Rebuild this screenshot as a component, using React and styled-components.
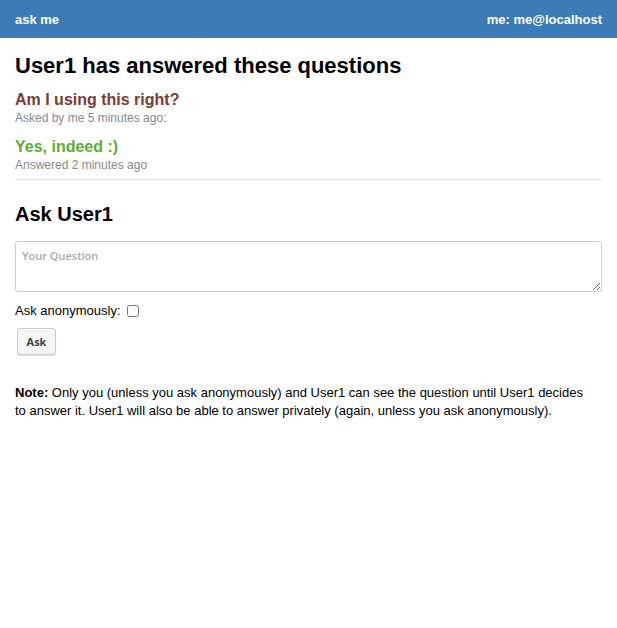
import styled, { createGlobalStyle } from "styled-components";

const Global = createGlobalStyle`
  body {
    margin: 0;
    font-family: "Liberation Sans", Arial, sans-serif;
    background: #fff;
    color: #000;
  }
`;

const Bar = styled.div`
  height: 38px;
  background: #3d7ab8;
  color: #fff;
  display: flex;
  align-items: center;
  justify-content: space-between;
  padding: 0 15px;
  font-size: 13px;
  font-weight: bold;
`;

const Main = styled.div`
  padding: 0 15px;
`;

const Title = styled.h1`
  font-size: 22px;
  margin: 15px 0 11px;
  line-height: 26px;
`;

const Heading = styled.h2`
  font-size: 20px;
  margin: 22px 0 15px;
  line-height: 24px;
`;

const Entry = styled.div`
  margin-bottom: ${({ $last }) => ($last ? "0" : "11px")};
`;

const Strong = styled.div`
  font-size: 16px;
  font-weight: bold;
  line-height: 20px;
  color: ${({ $color }) => $color};
`;

const Meta = styled.div`
  font-size: 12px;
  color: #888;
  line-height: 16px;
`;

const Rule = styled.hr`
  border: 0;
  border-top: 1px solid #e5e5e5;
  margin: 6px 0 0;
`;

const Input = styled.textarea`
  display: block;
  box-sizing: border-box;
  width: 100%;
  height: 51px;
  border: 1px solid #ccc;
  border-radius: 3px;
  padding: 6px;
  font-family: "Open Sans", sans-serif;
  font-size: 11px;
  font-weight: 600;
  resize: vertical;
  &::placeholder {
    color: #aaa;
  }
`;

const CheckRow = styled.label`
  display: flex;
  align-items: center;
  gap: 6px;
  font-size: 13px;
  margin-top: 11px;
`;

const Box = styled.input`
  margin: 0;
  width: 12px;
  height: 12px;
`;

const Button = styled.button`
  margin: 10px 0 0 2px;
  width: 39px;
  height: 27px;
  border: 1px solid #ccc;
  border-radius: 3px;
  background: #f5f5f5;
  font-family: "Open Sans", sans-serif;
  font-size: 11px;
  font-weight: bold;
  color: #444;
  box-shadow: 0 1px 1px rgba(0, 0, 0, 0.12);
`;

const Note = styled.p`
  font-size: 13px;
  line-height: 18px;
  margin: 29px 0 0;
  padding-right: 10px;
`;

export default function App() {
  return (
    <>
      <Global />
      <Bar>
        <span>ask me</span>
        <span>me: me@localhost</span>
      </Bar>
      <Main>
        <Title>User1 has answered these questions</Title>
        <Entry>
          <Strong $color="#7b3b30">Am I using this right?</Strong>
          <Meta>Asked by me 5 minutes ago:</Meta>
        </Entry>
        <Entry $last>
          <Strong $color="#5aaf34">Yes, indeed :)</Strong>
          <Meta>Answered 2 minutes ago</Meta>
        </Entry>
        <Rule />
        <Heading>Ask User1</Heading>
        <Input placeholder="Your Question" />
        <CheckRow>
          Ask anonymously: <Box type="checkbox" />
        </CheckRow>
        <Button>Ask</Button>
        <Note>
          <b>Note:</b> Only you (unless you ask anonymously) and User1 can see
          the question until User1 decides to answer it. User1 will also be
          able to answer privately (again, unless you ask anonymously).
        </Note>
      </Main>
    </>
  );
}
